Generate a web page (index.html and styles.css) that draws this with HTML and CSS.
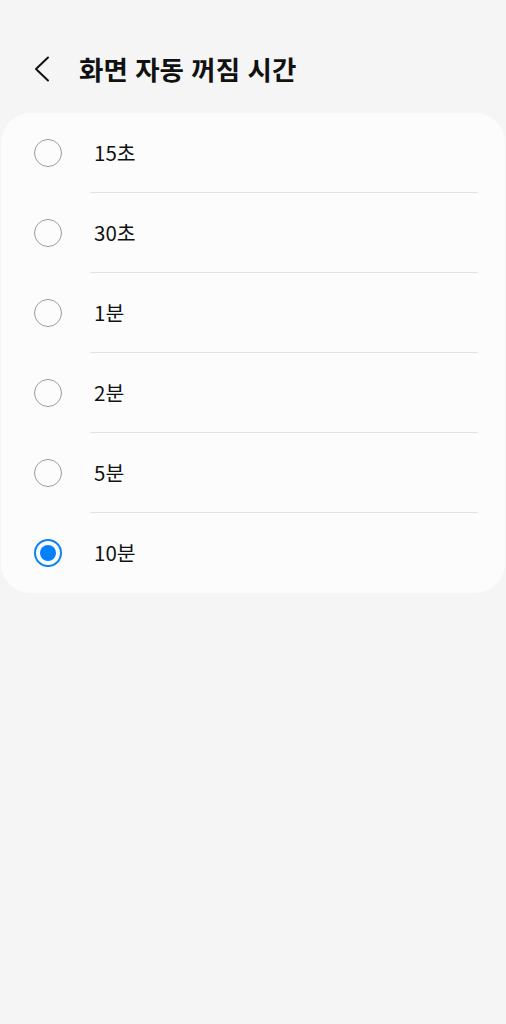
FILE: index.html
```html
<!DOCTYPE html>
<html lang="ko">
<head>
    <title>화면 자동 꺼짐 시간</title>
    <meta charset="UTF-8">
    <meta name="viewport" content="width=device-width, initial-scale=1">
    <link rel="stylesheet" href="styles.css">
</head>
<body>
    <header class="top-bar">
        <svg class="back" width="16" height="26" viewBox="0 0 16 26">
            <path d="M14 1.5 L2 13 L14 24.5" fill="none" stroke="#111" stroke-width="2" stroke-linecap="round" stroke-linejoin="round"/>
        </svg>
        <h1 class="title">화면 자동 꺼짐 시간</h1>
    </header>
    <div class="card">
        <div class="option"><span class="radio"></span><span class="label">15초</span></div>
        <div class="option"><span class="radio"></span><span class="label">30초</span></div>
        <div class="option"><span class="radio"></span><span class="label">1분</span></div>
        <div class="option"><span class="radio"></span><span class="label">2분</span></div>
        <div class="option"><span class="radio"></span><span class="label">5분</span></div>
        <div class="option"><span class="radio checked"></span><span class="label">10분</span></div>
    </div>
</body>
</html>
```

FILE: styles.css
```css
body, html {
    padding: 0;
    margin: 0;
    font-family: "Noto Sans CJK KR", "Noto Sans", sans-serif;
    background-color: #f5f5f5;
}

body {
    width: 506px;
    height: 1024px;
}

.top-bar {
    height: 113px;
    display: flex;
    align-items: center;
    padding: 24px 0 0 34px;
    box-sizing: border-box;
}

.title {
    margin: 0 0 0 29px;
    font-size: 26.5px;
    font-weight: bold;
    color: #111;
}

.card {
    margin: 0 1px;
    background: #fcfcfc;
    border-radius: 30px;
}

.option {
    height: 80px;
    display: flex;
    align-items: center;
    padding-left: 33px;
    position: relative;
}

.option + .option::before {
    content: "";
    position: absolute;
    top: -1px;
    left: 89px;
    right: 27px;
    height: 1px;
    background: #e2e2e2;
}

.radio {
    width: 28px;
    height: 28px;
    box-sizing: border-box;
    border: 1.5px solid #9b9b9b;
    border-radius: 50%;
    display: flex;
    align-items: center;
    justify-content: center;
}

.radio.checked {
    border: 2px solid #0a84f0;
}

.radio.checked::after {
    content: "";
    width: 16px;
    height: 16px;
    border-radius: 50%;
    background: #0381fe;
}

.label {
    margin: 0 0 3px 32px;
    font-size: 20.5px;
    color: #111;
}
```
